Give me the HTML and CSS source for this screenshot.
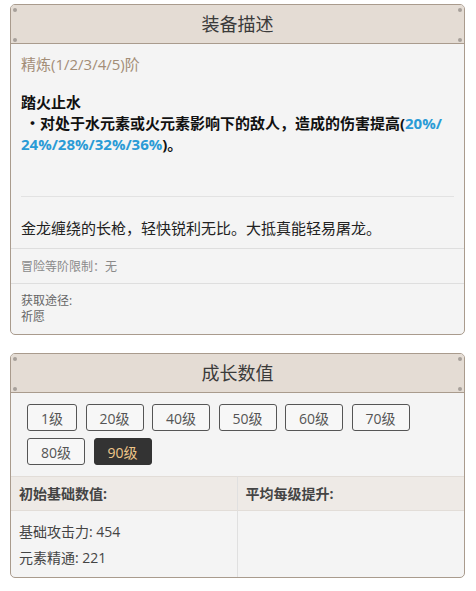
FILE: index.html
```html
<!DOCTYPE html>
<html lang="zh-CN">
<head>
    <meta charset="UTF-8">
    <meta name="viewport" content="width=device-width, initial-scale=1.0">
    <title>装备描述</title>
    <link rel="stylesheet" href="styles.css">
</head>
<body>

<div class="panel">
    <div class="panel-head">装备描述</div>
    <div class="panel-body">
        <div class="refine">精炼(1/2/3/4/5)阶</div>
        <div class="effect">
            <div>踏火止水</div>
            <div>&nbsp;・对处于水元素或火元素影响下的敌人，造成的伤害提高(<span class="num">20%/<wbr>24%/28%/32%/36%</span>)。</div>
        </div>
        <hr class="divider">
        <div class="story">金龙缠绕的长枪，轻快锐利无比。大抵真能轻易屠龙。</div>
    </div>
    <div class="panel-row limit">冒险等阶限制：无</div>
    <div class="panel-row source">
        <div>获取途径:</div>
        <div>祈愿</div>
    </div>
</div>

<div class="panel">
    <div class="panel-head">成长数值</div>
    <div class="levels">
        <button class="lv">1级</button>
        <button class="lv">20级</button>
        <button class="lv">40级</button>
        <button class="lv">50级</button>
        <button class="lv">60级</button>
        <button class="lv">70级</button>
        <button class="lv">80级</button>
        <button class="lv active">90级</button>
    </div>
    <div class="stats">
        <div class="stats-head">初始基础数值:</div>
        <div class="stats-head">平均每级提升:</div>
        <div class="stats-cell">
            <div>基础攻击力: 454</div>
            <div>元素精通: 221</div>
        </div>
        <div class="stats-cell"></div>
    </div>
</div>

</body>
</html>
```

FILE: styles.css
```css
* {
    box-sizing: border-box;
}
body {
    margin: 0;
    padding: 4px 11px 0 10px;
    font-family: "Open Sans", "Noto Sans CJK SC", sans-serif;
    color: #333;
    background: #ffffff;
}
.panel {
    border: 1px solid #a99b8d;
    border-radius: 5px;
    background: #f4f4f4;
    margin-bottom: 18px;
    overflow: hidden;
}
.panel-head {
    position: relative;
    height: 39px;
    line-height: 38px;
    text-align: center;
    font-size: 18px;
    color: #3a3a3a;
    background: #e4dcd4;
    border-bottom: 1px solid #a99b8d;
}
/* little rivets in the header corners */
.panel-head::before,
.panel-head::after {
    content: "";
    position: absolute;
    top: 3px;
    width: 4px;
    height: 4px;
    border-radius: 50%;
    background: #a7a09a;
    box-shadow: 0 30px 0 #a7a09a;
}
.panel-head::before {
    left: 2px;
}
.panel-head::after {
    right: 2px;
}
.panel-body {
    padding: 10px 10px 9px;
}
.refine {
    font-size: 15px;
    line-height: 20px;
    color: #a38d77;
}
.effect {
    margin-top: 18px;
    font-size: 15px;
    font-weight: bold;
    line-height: 21px;
    color: #111;
}
.num {
    color: #2a9bd6;
}
.divider {
    border: none;
    border-top: 1px solid #e2e2e2;
    margin: 41px 0 20px;
}
.story {
    font-size: 15px;
    line-height: 22px;
    color: #222;
}
.panel-row {
    border-top: 1px solid #dedede;
    padding: 0 10px;
    font-size: 12px;
}
.limit {
    height: 35px;
    line-height: 35px;
    color: #8a8a8a;
}
.source {
    padding-top: 9px;
    padding-bottom: 9px;
    line-height: 16px;
    color: #666;
}
.levels {
    display: flex;
    flex-wrap: wrap;
    gap: 7px 8.5px;
    padding: 11px 16px 11px;
}
.lv {
    height: 27px;
    padding: 0 13px;
    font-family: "Open Sans", "Noto Sans CJK SC", sans-serif;
    font-size: 14px;
    color: #555;
    background: #f7f7f7;
    border: 1px solid #555;
    border-radius: 3px;
}
.lv.active {
    background: #333;
    border-color: #333;
    color: #efc78a;
}
.stats {
    display: grid;
    grid-template-columns: 1fr 1fr;
}
.stats-head {
    height: 35px;
    line-height: 34px;
    padding: 0 8px;
    font-size: 14px;
    font-weight: bold;
    color: #444;
    background: #eeeae6;
    border-top: 1px solid #e2ddd8;
    border-bottom: 1px solid #e2ddd8;
}
.stats-head:first-child,
.stats-cell:nth-child(3) {
    border-right: 1px solid #e0e0e0;
}
.stats-cell {
    padding: 8px 8px 6px;
    font-size: 14px;
    line-height: 26px;
    color: #444;
}
```
